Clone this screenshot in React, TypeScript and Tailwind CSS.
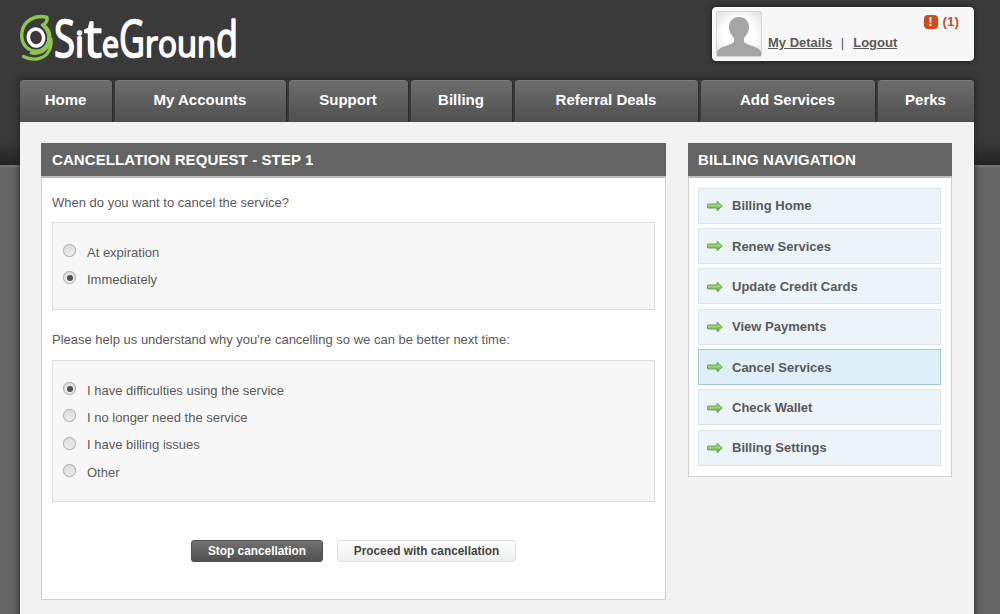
import { useState } from "react";

const tabs = [
  { label: "Home", width: "w-[92px]" },
  { label: "My Accounts", width: "w-[171px]" },
  { label: "Support", width: "w-[119px]" },
  { label: "Billing", width: "w-[101px]" },
  { label: "Referral Deals", width: "w-[183px]" },
  { label: "Add Services", width: "w-[174px]" },
  { label: "Perks", width: "w-[96px]" },
];

const billingLinks = [
  "Billing Home",
  "Renew Services",
  "Update Credit Cards",
  "View Payments",
  "Cancel Services",
  "Check Wallet",
  "Billing Settings",
];

const reasons = [
  "I have difficulties using the service",
  "I no longer need the service",
  "I have billing issues",
  "Other",
];

const wordmark = [
  { char: "S", x: 34, width: 21, size: 52 },
  { char: "i", x: 55, width: 9, size: 36 },
  { char: "t", x: 64, width: 18, size: 53 },
  { char: "e", x: 82, width: 17, size: 36 },
  { char: "G", x: 99, width: 26, size: 52 },
  { char: "r", x: 125, width: 13, size: 37 },
  { char: "o", x: 138, width: 19, size: 37 },
  { char: "u", x: 157, width: 20, size: 37 },
  { char: "n", x: 177, width: 19, size: 37 },
  { char: "d", x: 196, width: 22, size: 49 },
];

function Logo() {
  return (
    <svg className="block h-20 w-[260px] overflow-visible" viewBox="0 -12 260 80" role="img" aria-label="SiteGround">
      <g fill="none" strokeLinecap="round" strokeLinejoin="round">
        <path
          d="M22.500 13C25 12 28 9 27 5.500C15 2 3 9 1.800 21C1 31 6 37 13 38.500C21 40 28 35 28.500 27C29 21 26 16 22.500 13"
          stroke="#8bc84a"
          strokeWidth="3.400"
        />
        <path d="M25 14C31 19 31.500 27 28 34C24 40.500 17 42.500 11 41" stroke="#8bc84a" strokeWidth="2.800" />
        <path d="M3.500 44.500C12 49 24 48 29 39C31 35 31.500 31 31 27" stroke="#8bc84a" strokeWidth="3.200" />
        <ellipse cx="16" cy="25.500" rx="10" ry="11" stroke="#3a3a3a" strokeWidth="2" />
        <ellipse cx="16" cy="25.500" rx="7.600" ry="8.600" stroke="#ffffff" strokeWidth="3.600" transform="rotate(-14 16 25.500)" />
      </g>
      <text
        className="font-['Open_Sans',sans-serif]"
        y="45"
        fill="#ffffff"
        stroke="#ffffff"
        strokeWidth="1.700"
        strokeLinejoin="round"
      >
        {wordmark.map((glyph) => (
          <tspan
            key={glyph.x}
            x={glyph.x}
            fontSize={glyph.size}
            textLength={glyph.width}
            lengthAdjust="spacingAndGlyphs"
          >
            {glyph.char}
          </tspan>
        ))}
      </text>
    </svg>
  );
}

function Avatar() {
  return (
    <svg className="block h-[46px] w-[46px]" viewBox="0 0 46 46">
      <defs>
        <radialGradient id="avatarBg" r="0.7">
          <stop offset="0.5" stopColor="#ffffff" />
          <stop offset="1" stopColor="#dedede" />
        </radialGradient>
      </defs>
      <rect x="0.500" y="0.500" width="45" height="45" rx="1.500" fill="url(#avatarBg)" stroke="#d4d4d4" />
      <path
        d="M23 6C16.500 6 13 10.500 13 16C13 21 15.500 24 18 27V31C16 34 3 35 1 41V45H45V41C43 35 30 34 28 31V27C30.500 24 33 21 33 16C33 10.500 29.500 6 23 6Z"
        fill="#a5a5a5"
      />
    </svg>
  );
}

function Arrow() {
  return (
    <svg className="block h-3 w-4 shrink-0" viewBox="0 0 16 12">
      <defs>
        <linearGradient id="arrowFill" x1="0" y1="0" x2="0" y2="1">
          <stop offset="0.1" stopColor="#91c776" />
          <stop offset="0.45" stopColor="#9bd672" />
          <stop offset="1" stopColor="#4f963a" />
        </linearGradient>
      </defs>
      <path
        d="M1 4H10V1.200L15.300 6L10 10.800V8H1Q0.500 8 0.500 7.500V4.500Q0.500 4 1 4Z"
        fill="url(#arrowFill)"
        stroke="#62a04a"
        strokeWidth="0.900"
        strokeLinejoin="round"
      />
    </svg>
  );
}

type RadioProps = { label: string; name: string; checked: boolean; onSelect: () => void };

function Radio({ label, name, checked, onSelect }: RadioProps) {
  return (
    <label className="flex h-[27.300px] items-center gap-[11px] text-[13px]">
      <input type="radio" name={name} checked={checked} onChange={onSelect} className="sr-only" />
      <span className="-mt-1 flex size-[13px] items-center justify-center rounded-full border border-[#adadad] bg-linear-to-b from-[#dedede] to-[#ececec] shadow-[0_0_1px_#bbb]">
        {checked && <span className="size-[6px] rounded-full bg-[#505050]" />}
      </span>
      <span>{label}</span>
    </label>
  );
}

function PanelTitle({ children }: { children: string }) {
  return (
    <h2 className="h-[35px] border-b-2 border-[#bdbdbd] bg-[#646464] text-[15px] leading-[33px] font-bold tracking-[0.1px] text-white">
      {children}
    </h2>
  );
}

export default function App() {
  const [timing, setTiming] = useState(1);
  const [reason, setReason] = useState(0);

  return (
    <div className="h-[614px] overflow-hidden bg-[#656565] bg-[linear-gradient(to_bottom,#3a3a3a_0,#3a3a3a_140px,#252525_163px,#222222_165px,#787878_165px,#787878_166px,#656565_168px,#656565_100%)] font-['Liberation_Sans',Arial,sans-serif] text-[13px] text-[#5a5a5a]">
      <div className="ml-5 flex w-[954px] flex-col">
        <header className="flex h-20 justify-between">
          <Logo />
          <div className="mt-[7px] flex h-[54px] w-[262px] rounded-[4px] border border-white bg-[#f7f7f7] pt-[3px] pl-[3px] shadow-[0_0_5px_#151515]">
            <Avatar />
            <div className="flex grow flex-col pr-[14px] pl-[6px]">
              <div className="mt-[3px] flex h-4 items-center justify-end gap-[5px] font-bold text-[#cf4c24]">
                <span className="flex h-[14px] w-[14px] items-center justify-center rounded-[4px] bg-[#d84718] text-[12px] leading-none text-white">
                  !
                </span>
                <span className="text-[13.500px] leading-4">(1)</span>
              </div>
              <div className="mt-[5px] flex leading-4">
                <a className="font-bold underline">My Details</a>
                <span className="mr-[9px] ml-[8.500px]">|</span>
                <a className="font-bold underline">Logout</a>
              </div>
            </div>
          </div>
        </header>

        <div className="shadow-[0_0_7px_#222222]">
          <nav className="flex h-[42px] gap-[3px] bg-[#3a3a3a]">
            {tabs.map((tab) => (
              <a
                key={tab.label}
                className={`${tab.width} h-[42px] rounded-t-[4px] border-t border-[#7c7c7c] bg-linear-to-b from-[#6d6d6d] to-[#505050] pr-px text-center text-[15px] leading-[38px] font-bold text-white shadow-[1px_0_1px_#2b2b2b]`}
              >
                {tab.label}
              </a>
            ))}
          </nav>

          <main className="flex h-[520px] items-start gap-[22px] bg-[#f2f2f2] pt-[21px] pl-[21px] shadow-[inset_0_1px_0_#ffffff]">
            <section className="h-[457px] w-[625px] border border-t-0 border-[#cfcfcf] bg-white">
              <div className="-mx-px bg-[#646464] [&>h2]:pl-[11px]">
                <PanelTitle>CANCELLATION REQUEST - STEP 1</PanelTitle>
              </div>
              <div className="px-[10px]">
                <p className="mt-4 leading-[18px]">When do you want to cancel the service?</p>
                <div className="mt-[10px] h-[88px] border border-[#dcdcdc] bg-[#f7f7f7] pt-4 pl-[10px]">
                  {["At expiration", "Immediately"].map((label, i) => (
                    <Radio key={label} name="timing" label={label} checked={timing === i} onSelect={() => setTiming(i)} />
                  ))}
                </div>
                <p className="mt-[21px] leading-[18px]">
                  Please help us understand why you're cancelling so we can be better next time:
                </p>
                <div className="mt-[11px] h-[142px] border border-[#dcdcdc] bg-[#f7f7f7] pt-4 pl-[10px]">
                  {reasons.map((label, i) => (
                    <Radio key={label} name="reason" label={label} checked={reason === i} onSelect={() => setReason(i)} />
                  ))}
                </div>
                <div className="mt-[38px] ml-[139px] flex gap-[14px]">
                  <button className="h-[22px] w-[132px] rounded-[3px] border border-[#515151] bg-linear-to-b from-[#707070] to-[#515151] text-[11.850px] leading-5 font-bold text-white">
                    Stop cancellation
                  </button>
                  <button className="h-[22px] w-[179px] rounded-[3px] border border-[#dedede] bg-linear-to-b from-white to-[#eeeeee] text-[11.850px] leading-5 font-bold text-[#444444]">
                    Proceed with cancellation
                  </button>
                </div>
              </div>
            </section>

            <aside className="h-[334px] w-[264px] border border-t-0 border-[#cfcfcf] bg-white">
              <div className="-mx-px bg-[#646464] [&>h2]:pl-[10px]">
                <PanelTitle>BILLING NAVIGATION</PanelTitle>
              </div>
              <nav className="mt-[9.500px] flex flex-col gap-[4.350px] pr-[10px] pl-[9px]">
                {billingLinks.map((label) => (
                  <a
                    key={label}
                    className={`flex h-9 items-center gap-[9px] border pt-px pl-2 font-bold ${
                      label === "Cancel Services" ? "border-[#a4c8d9] bg-[#dfeffa]" : "border-[#dde3e8] bg-[#ecf3f9]"
                    }`}
                  >
                    <Arrow />
                    <span>{label}</span>
                  </a>
                ))}
              </nav>
            </aside>
          </main>
        </div>
      </div>
    </div>
  );
}
